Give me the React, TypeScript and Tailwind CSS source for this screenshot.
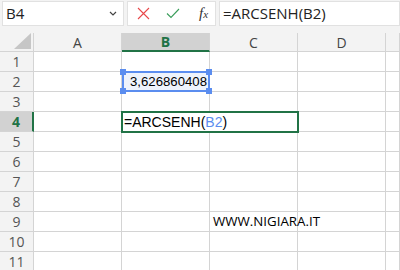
import React from "react";

const cols = ["A", "B", "C", "D", ""];
const rows = [1, 2, 3, 4, 5, 6, 7, 8, 9, 10, 11];

export default function App() {
  return (
    <div className="w-[400px] h-[270px] overflow-hidden bg-white relative" style={{ fontFamily: '"Open Sans", "Noto Sans", sans-serif' }}>
      {/* toolbar */}
      <div className="h-[33px] bg-[#f3f3f3] flex items-start pt-[1px] pl-[2px] gap-[3px]">
        <div className="w-[122px] h-[25px] bg-white border border-[#e1e1e1] flex items-center justify-between pl-[3px] pr-[6px]">
          <span className="text-[15px] text-[#222] leading-none">B4</span>
          <svg width="8" height="5" viewBox="0 0 8 5"><path d="M1 1 L4 4 L7 1" stroke="#444" strokeWidth="1.2" fill="none" /></svg>
        </div>
        <div className="w-[89px] h-[25px] bg-white border border-[#e1e1e1] flex items-center pl-[9px] gap-[16px]">
          <svg width="13" height="13" viewBox="0 0 13 13"><path d="M1 1 L12 12 M12 1 L1 12" stroke="#e8484a" strokeWidth="1.1" fill="none" /></svg>
          <svg width="14" height="11" viewBox="0 0 14 11"><path d="M1 5.5 L5 9.5 L13 1" stroke="#3a9d5a" strokeWidth="1.1" fill="none" /></svg>
          <span className="ml-[3px] text-[15px] text-[#333] italic leading-none" style={{ fontFamily: '"Liberation Serif", serif' }}>f<span className="text-[11px]">x</span></span>
        </div>
        <div className="flex-1 h-[25px] bg-white border border-[#e1e1e1] flex items-center pl-[3px]">
          <span className="text-[15px] text-[#222] leading-none">=ARCSENH(B2)</span>
        </div>
      </div>
      {/* grid */}
      <div className="relative">
        <div className="grid grid-cols-[34px_88px_88px_88px_88px_1fr] grid-rows-[19px_repeat(11,20px)]">
          <div className="bg-[#f3f3f3] border-r border-b border-[#d4d4d4] relative">
            <svg className="absolute right-[2px] bottom-[2px]" width="17" height="16" viewBox="0 0 17 16"><path d="M17 0 L17 16 L0 16 Z" fill="#c6c6c6" /></svg>
          </div>
          {cols.map((c, i) => (
            <div
              key={c + i}
              className={
                c === "B"
                  ? "bg-[#d2d2d2] border-r border-[#d4d4d4] border-b-2 border-b-[#217346] flex items-center justify-center text-[14px] font-bold text-[#217346]"
                  : "bg-[#f3f3f3] border-r border-b border-[#d4d4d4] flex items-center justify-center text-[14px] text-[#444]"
              }
            >
              {c}
            </div>
          ))}
          {rows.map((r) => (
            <React.Fragment key={r}>
              <div
                className={
                  r === 4
                    ? "bg-[#d2d2d2] border-r-2 border-r-[#217346] border-b border-[#d4d4d4] flex items-center justify-center text-[14px] font-bold text-[#217346]"
                    : "bg-[#f3f3f3] border-r border-b border-[#d4d4d4] flex items-center justify-center text-[14px] text-[#555]"
                }
              >
                {r}
              </div>
              {cols.map((c, i) => (
                <div key={c + i} className="border-r border-b border-[#d4d4d4] flex items-center overflow-visible whitespace-nowrap">
                  {r === 9 && c === "C" ? (
                    <span className="pl-[3px] text-[13.3px] text-black leading-none">WWW.NIGIARA.IT</span>
                  ) : null}
                </div>
              ))}
            </React.Fragment>
          ))}
        </div>
        {/* B2 selection */}
        <div className="absolute left-[122px] top-[38px] w-[88px] h-[21px] border-2 border-[#5b8def] bg-[#eef3fc] flex items-center justify-end pr-[1px]" style={{ fontFamily: '"Liberation Sans", Arial, sans-serif' }}>
          <span className="text-[13.2px] text-black leading-none">3,626860408</span>
          <div className="absolute -left-[4px] -top-[4px] w-[6px] h-[6px] bg-[#5b8def]" />
          <div className="absolute -right-[4px] -top-[4px] w-[6px] h-[6px] bg-[#5b8def]" />
          <div className="absolute -left-[4px] -bottom-[4px] w-[6px] h-[6px] bg-[#5b8def]" />
          <div className="absolute -right-[4px] -bottom-[4px] w-[6px] h-[6px] bg-[#5b8def]" />
        </div>
        {/* B4 active */}
        <div className="absolute left-[121px] top-[78px] w-[178px] h-[22px] border-2 border-[#217346] bg-white flex items-center pl-[1px]" style={{ fontFamily: '"Liberation Sans", Arial, sans-serif' }}>
          <span className="text-[14px] text-black leading-none">=ARCSENH(<span className="text-[#5b8def]">B2</span>)</span>
        </div>
      </div>
    </div>
  );
}
